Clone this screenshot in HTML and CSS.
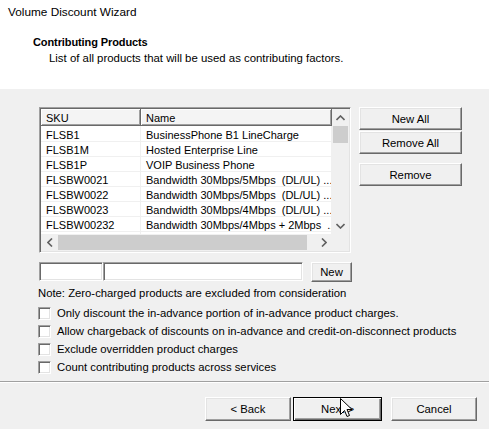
FILE: index.html
```html
<!DOCTYPE html>
<html>
<head>
<meta charset="utf-8">
<link rel="stylesheet" href="styles.css">
</head>
<body>
<div class="window">
  <div class="header">
    <div class="title">Volume Discount Wizard</div>
    <div class="heading">Contributing Products</div>
    <div class="desc">List of all products that will be used as contributing factors.</div>
  </div>
  <div class="body">
    <div class="top-row">
      <div class="listbox">
        <div class="list-main">
          <div class="list-view">
            <div class="list-head">
              <div class="hcell c-sku">SKU</div>
              <div class="hcell c-name">Name</div>
            </div>
            <div class="list-rows">
              <div class="row"><div class="cell c-sku">FLSB1</div><div class="cell c-name">BusinessPhone B1 LineCharge</div></div>
              <div class="row"><div class="cell c-sku">FLSB1M</div><div class="cell c-name">Hosted Enterprise Line</div></div>
              <div class="row"><div class="cell c-sku">FLSB1P</div><div class="cell c-name">VOIP Business Phone</div></div>
              <div class="row"><div class="cell c-sku">FLSBW0021</div><div class="cell c-name">Bandwidth 30Mbps/5Mbps&nbsp; (DL/UL) ...</div></div>
              <div class="row"><div class="cell c-sku">FLSBW0022</div><div class="cell c-name">Bandwidth 30Mbps/5Mbps&nbsp; (DL/UL) ...</div></div>
              <div class="row"><div class="cell c-sku">FLSBW0023</div><div class="cell c-name">Bandwidth 30Mbps/4Mbps&nbsp; (DL/UL) ...</div></div>
              <div class="row"><div class="cell c-sku">FLSBW00232</div><div class="cell c-name">Bandwidth 30Mbps/4Mbps + 2Mbps&nbsp; ..</div></div>
              <div class="row"><div class="cell c-sku"></div><div class="cell c-name"></div></div>
            </div>
          </div>
          <div class="vscroll">
            <div class="sb-btn">
              <svg width="9" height="6" viewBox="0 0 9 6"><path d="M0.5 5 L4.5 1 L8.5 5" fill="none" stroke="#606060" stroke-width="1.6"/></svg>
            </div>
            <div class="vthumb"></div>
            <div class="vtrack"></div>
            <div class="sb-btn">
              <svg width="9" height="6" viewBox="0 0 9 6"><path d="M0.5 1 L4.5 5 L8.5 1" fill="none" stroke="#606060" stroke-width="1.6"/></svg>
            </div>
          </div>
        </div>
        <div class="hscroll-row">
          <div class="hscroll">
            <div class="sb-btn h">
              <svg width="6" height="9" viewBox="0 0 6 9"><path d="M5 0.5 L1 4.5 L5 8.5" fill="none" stroke="#606060" stroke-width="1.6"/></svg>
            </div>
            <div class="hthumb"></div>
            <div class="htrack"></div>
            <div class="sb-btn h">
              <svg width="6" height="9" viewBox="0 0 6 9"><path d="M1 0.5 L5 4.5 L1 8.5" fill="none" stroke="#606060" stroke-width="1.6"/></svg>
            </div>
          </div>
          <div class="corner"></div>
        </div>
      </div>
      <div class="side-buttons">
        <button class="btn side">New All</button>
        <button class="btn side">Remove All</button>
        <button class="btn side gap">Remove</button>
      </div>
    </div>
    <div class="input-row">
      <div class="field f-sku"></div>
      <div class="field f-name"></div>
      <button class="btn new">New</button>
    </div>
    <div class="note">Note: Zero-charged products are excluded from consideration</div>
    <div class="checks">
      <label class="check"><span class="box"></span>Only discount the in-advance portion of in-advance product charges.</label>
      <label class="check"><span class="box"></span>Allow chargeback of discounts on in-advance and credit-on-disconnect products</label>
      <label class="check"><span class="box"></span>Exclude overridden product charges</label>
      <label class="check"><span class="box"></span>Count contributing products across services</label>
    </div>
  </div>
  <div class="separator"></div>
  <div class="footer">
    <button class="btn foot">&lt; Back</button>
    <button class="btn foot default">Next &gt;</button>
    <button class="btn foot">Cancel</button>
  </div>
  <svg class="cursor" width="13" height="21" viewBox="0 0 13 21">
    <path d="M0.5 0.5 L0.5 16.5 L4.5 12.5 L7 18.5 L9.5 17.5 L7 11.5 L12 11.5 Z" fill="#fff" stroke="#000" stroke-width="1" stroke-linejoin="miter"/>
  </svg>
</div>
</body>
</html>
```

FILE: styles.css
```css
* { box-sizing: border-box; }
html, body { margin: 0; padding: 0; }
body {
  background: #f0f0f0;
  font-family: "Liberation Sans", Arial, sans-serif;
  font-size: 11.3px;
  color: #000;
}
.window {
  position: relative;
  width: 489px;
  height: 429px;
  overflow: hidden;
  background: #f0f0f0;
}
.header {
  height: 89px;
  background: #fff;
  padding-top: 4px;
}
.title {
  line-height: 16px;
  padding-left: 8px;
  font-size: 11.8px;
}
.heading {
  margin-top: 14px;
  line-height: 16px;
  padding-left: 33px;
  font-weight: bold;
  font-size: 11px;
  letter-spacing: -0.1px;
}
.desc {
  line-height: 16px;
  padding-left: 49px;
  font-size: 11.4px;
}
.body {
  padding: 18px 0 0 39px;
}
.top-row {
  display: flex;
  gap: 8px;
}
.listbox {
  width: 312px;
  height: 146px;
  border: 1px solid;
  border-color: #a0a0a0 #fff #fff #a0a0a0;
  box-shadow: inset 1px 1px 0 #696969, inset -1px -1px 0 #e3e3e3;
  padding: 1px;
  background: #fff;
  display: flex;
  flex-direction: column;
  font-size: 11px;
}
.list-main {
  display: flex;
  height: 125px;
}
.list-view {
  flex: 1;
  overflow: hidden;
}
.list-head {
  display: flex;
  height: 17px;
}
.hcell {
  line-height: 16px;
  padding-left: 5px;
  padding-top: 1px;
  border-right: 1px solid #696969;
  border-bottom: 1px solid #696969;
  box-shadow: inset 1px 1px 0 #fff, inset -1px -1px 0 #a0a0a0;
  background: #f4f4f4;
  height: 17px;
}
.c-sku { width: 100px; }
.c-name { flex: 1; }
.row {
  display: flex;
  height: 15px;
  border-bottom: 1px solid #f0f0f0;
}
.row:first-child { height: 16px; }
.row:first-child .cell { padding-top: 2px; }
.cell {
  line-height: 14px;
  padding-left: 5px;
  padding-top: 1px;
  white-space: nowrap;
  overflow: hidden;
  border-right: 1px solid #f0f0f0;
}
.vscroll {
  width: 17px;
  background: #f0f0f0;
  display: flex;
  flex-direction: column;
}
.sb-btn {
  height: 17px;
  display: flex;
  align-items: center;
  justify-content: center;
  flex: none;
}
.sb-btn.h { width: 17px; height: 17px; }
.vthumb {
  height: 17px;
  margin: 0 1px;
  background: #cdcdcd;
}
.vtrack { flex: 1; }
.hscroll-row {
  display: flex;
  height: 17px;
}
.hscroll {
  flex: 1;
  display: flex;
  background: #f0f0f0;
}
.hthumb {
  width: 249px;
  margin: 1px 0;
  background: #cdcdcd;
}
.htrack { flex: 1; }
.corner {
  width: 17px;
  background: #f0f0f0;
}
.side-buttons {
  display: flex;
  flex-direction: column;
  gap: 1px;
}
.btn {
  font-family: "Liberation Sans", Arial, sans-serif;
  font-size: 11.3px;
  color: #000;
  background: #f0f0f0;
  border: 1px solid;
  border-color: #fff #696969 #696969 #fff;
  box-shadow: inset -1px -1px 0 #a0a0a0, inset 1px 1px 0 #e3e3e3;
  padding: 0;
  margin: 0;
}
.side {
  width: 103px;
  height: 23px;
}
.side.gap { margin-top: 8px; }
.input-row {
  display: flex;
  align-items: flex-start;
  margin-top: 9px;
  height: 20px;
}
.field {
  height: 19px;
  background: #fff;
  border: 1px solid;
  border-color: #a0a0a0 #fff #fff #a0a0a0;
  box-shadow: inset 1px 1px 0 #696969, inset -1px -1px 0 #e3e3e3;
}
.f-sku { width: 64px; }
.f-name { width: 200px; }
.new {
  width: 41px;
  height: 20px;
  margin-left: 8px;
}
.note {
  margin-top: 3px;
  margin-left: -1px;
  line-height: 16px;
}
.checks {
  margin-top: 3px;
  display: flex;
  flex-direction: column;
}
.check {
  display: flex;
  align-items: center;
  height: 18px;
  margin-left: -1px;
}
.box {
  width: 13px;
  height: 13px;
  background: #fff;
  border: 1px solid;
  border-color: #a0a0a0 #fff #fff #a0a0a0;
  box-shadow: inset 1px 1px 0 #696969, inset -1px -1px 0 #e3e3e3;
  margin-right: 6px;
  flex: none;
}
.separator {
  margin-top: 5px;
  height: 2px;
  border-top: 1px solid #a0a0a0;
  border-bottom: 1px solid #fff;
}
.footer {
  display: flex;
  justify-content: flex-end;
  gap: 2px;
  padding: 14px 12px 0 0;
}
.foot {
  width: 86px;
  height: 24px;
}
.foot.default {
  width: 89px;
  margin-right: 7px;
  border: 1px solid #000;
  box-shadow: inset 1px 1px 0 #fff, inset -1px -1px 0 #696969, inset -2px -2px 0 #a0a0a0;
}
.cursor {
  position: absolute;
  left: 340px;
  top: 398px;
}
```
